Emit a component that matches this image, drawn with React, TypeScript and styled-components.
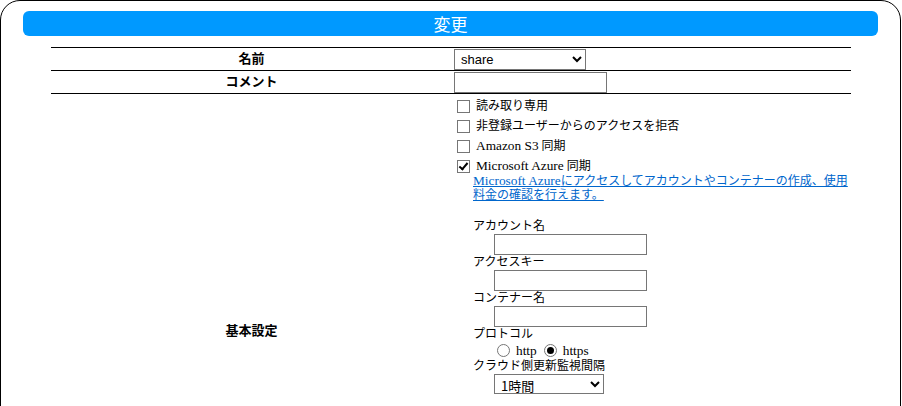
import React from 'react';
import styled, { createGlobalStyle } from 'styled-components';

const GlobalStyle = createGlobalStyle`
  html, body {
    margin: 0;
    padding: 0;
    background: #fff;
  }
  body {
    font-family: 'Liberation Serif', 'Noto Sans CJK JP', serif;
    font-size: 12px;
    color: #000;
  }
`;

const checkOptions: { latin?: string; label: string; checked: boolean }[] = [
  { label: '読み取り専用', checked: false },
  { label: '非登録ユーザーからのアクセスを拒否', checked: false },
  { latin: 'Amazon S3', label: ' 同期', checked: false },
  { latin: 'Microsoft Azure', label: ' 同期', checked: true },
];

const azureFields = ['アカウント名', 'アクセスキー', 'コンテナー名'];

const App: React.FC = () => {
  return (
    <>
      <GlobalStyle />
      <Frame>
        <TitleBar>変更</TitleBar>
        <FormTable>
          <colgroup>
            <LabelCol />
            <col />
          </colgroup>
          <tbody>
            <Row $height={22}>
              <LabelCell>名前</LabelCell>
              <ValueCell>
                <NameSelect defaultValue="share">
                  <option value="share">share</option>
                </NameSelect>
              </ValueCell>
            </Row>
            <Row $height={23}>
              <LabelCell>コメント</LabelCell>
              <ValueCell>
                <TextField type="text" />
              </ValueCell>
            </Row>
            <tr>
              <LabelCell>基本設定</LabelCell>
              <ValueCell>
                <Settings>
                  {checkOptions.map((opt) => (
                    <CheckRow key={(opt.latin || '') + opt.label}>
                      <CheckBox type="checkbox" defaultChecked={opt.checked} />
                      <span>
                        {opt.latin && <Latin>{opt.latin}</Latin>}
                        {opt.label}
                      </span>
                    </CheckRow>
                  ))}
                  <AzureBlock>
                    <HelpLink href="#">
                      <Latin>Microsoft Azure</Latin>
                      にアクセスしてアカウントやコンテナーの作成、使用料金の確認を行えます。
                    </HelpLink>
                    <Spacer />
                    {azureFields.map((f) => (
                      <React.Fragment key={f}>
                        <FieldLabel>{f}</FieldLabel>
                        <FieldBody>
                          <TextField type="text" />
                        </FieldBody>
                      </React.Fragment>
                    ))}
                    <FieldLabel>プロトコル</FieldLabel>
                    <RadioRow>
                      <Radio type="radio" name="proto" />
                      <RadioText>http</RadioText>
                      <Radio type="radio" name="proto" defaultChecked />
                      <RadioText>https</RadioText>
                    </RadioRow>
                    <FieldLabel>クラウド側更新監視間隔</FieldLabel>
                    <FieldBody>
                      <IntervalSelect defaultValue="1h">
                        <option value="1h">1時間</option>
                      </IntervalSelect>
                    </FieldBody>
                  </AzureBlock>
                </Settings>
              </ValueCell>
            </tr>
          </tbody>
        </FormTable>
      </Frame>
    </>
  );
};

export default App;

const Frame = styled.div`
  width: 901px;
  box-sizing: border-box;
  border: 1px solid #000;
  border-radius: 20px 20px 0 0;
  padding: 10px 22px 0;
  min-height: 600px;
`;

const TitleBar = styled.div`
  height: 25px;
  line-height: 25px;
  background: #0099ff;
  border-radius: 6px;
  color: #fff;
  text-align: center;
  font-family: 'Noto Sans CJK JP', sans-serif;
  font-size: 17px;
`;

const FormTable = styled.table`
  width: 800px;
  table-layout: fixed;
  margin: 11px 0 0 28px;
  border-collapse: collapse;
  border-spacing: 0;
`;

const LabelCol = styled.col`
  width: 401px;
`;

const Row = styled.tr<{ $height: number }>`
  height: ${(p) => p.$height}px;

  & > th {
    padding-bottom: 3px;
  }
`;

const LabelCell = styled.th`
  border-top: 1px solid #000;
  border-bottom: 1px solid #000;
  padding: 0;
  font-family: 'Noto Sans CJK JP', sans-serif;
  font-size: 13px;
  line-height: 16px;
  font-weight: bold;
  text-align: center;
  vertical-align: middle;
`;

const ValueCell = styled.td`
  border-top: 1px solid #000;
  border-bottom: 1px solid #000;
  padding: 1px 2px 0 2px;
  vertical-align: middle;
  line-height: 0;
  overflow: visible;
`;

const Latin = styled.span`
  font-family: 'Liberation Serif', serif;
  font-size: 13.33px;
`;

const NameSelect = styled.select`
  display: block;
  width: 132px;
  height: 21px;
  margin: 0;
  font-family: 'Liberation Sans', sans-serif;
  font-size: 13px;
  color: #000;
  border: 1px solid #767676;
  border-radius: 0;
  background: #fff;
  padding: 0 2px;
`;

const IntervalSelect = styled(NameSelect)`
  width: 110px;
  height: 20px;
  font-family: 'Noto Sans CJK JP', sans-serif;
`;

const TextField = styled.input`
  display: block;
  width: 153px;
  height: 21px;
  box-sizing: border-box;
  border: 1px solid #767676;
  border-radius: 0;
  margin: 0;
  padding: 1px 2px;
  font-size: 13px;
`;

const Settings = styled.div`
  line-height: 14px;
  padding: 1px 0 172px;
`;

const CheckRow = styled.label`
  display: flex;
  align-items: center;
  height: 20px;
  white-space: nowrap;
`;

const CheckBox = styled.input`
  appearance: none;
  width: 13px;
  height: 13px;
  margin: 0 6px 0 3px;
  border: 1px solid #767676;
  background: #fff;
  box-sizing: border-box;
  position: relative;
  flex: none;

  &:checked::after {
    content: '';
    position: absolute;
    left: 3px;
    top: 0px;
    width: 3px;
    height: 7px;
    border: solid #000;
    border-width: 0 2px 2px 0;
    transform: rotate(40deg);
  }
`;

const AzureBlock = styled.div`
  padding-left: 19px;
  margin-top: -2px;
`;

const HelpLink = styled.a`
  display: block;
  width: 380px;
  color: #0066cc;
  text-decoration: underline;
  line-height: 14px;
`;

const Spacer = styled.div`
  height: 17px;
`;

const FieldLabel = styled.div`
  line-height: 15px;
  height: 15px;
  white-space: nowrap;
`;

const FieldBody = styled.div`
  padding-left: 21px;
  line-height: 0;
`;

const RadioRow = styled.div`
  display: flex;
  align-items: center;
  height: 17px;
  padding-left: 21px;
`;

const Radio = styled.input`
  appearance: none;
  width: 13px;
  height: 13px;
  margin: 0 6px 0 3px;
  border: 1px solid #767676;
  border-radius: 50%;
  background: #fff;
  box-sizing: border-box;
  position: relative;
  flex: none;

  &:checked::after {
    content: '';
    position: absolute;
    left: 2px;
    top: 2px;
    width: 7px;
    height: 7px;
    border-radius: 50%;
    background: #000;
  }
`;

const RadioText = styled.span`
  font-family: 'Liberation Serif', serif;
  font-size: 13.33px;
  margin-right: 4px;
`;
